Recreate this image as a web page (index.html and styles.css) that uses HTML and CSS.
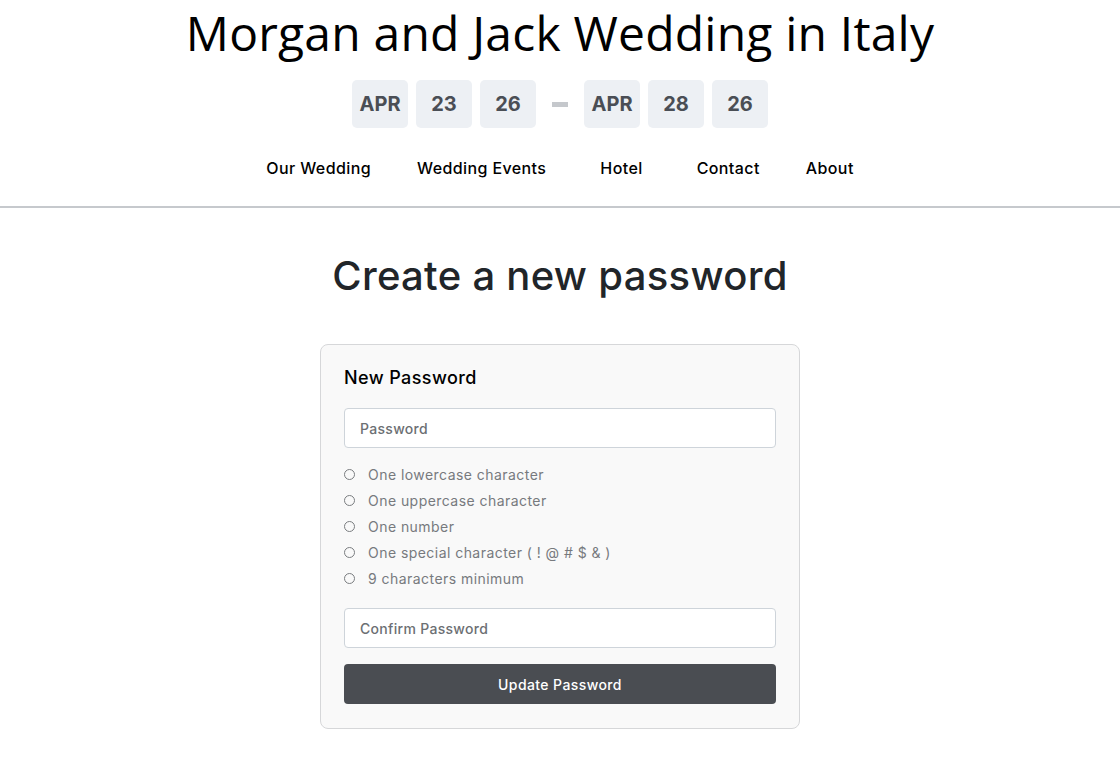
FILE: index.html
```html
<!DOCTYPE html>
<html lang="en">
<head>
<meta charset="utf-8">
<title>Create a new password</title>
<link rel="stylesheet" href="styles.css">
</head>
<body>
<header class="site-header">
  <h1 class="site-title">Morgan and Jack Wedding in Italy</h1>
  <div class="dates">
    <div class="date-group">
      <span class="chip">APR</span>
      <span class="chip">23</span>
      <span class="chip">26</span>
    </div>
    <span class="dash"></span>
    <div class="date-group">
      <span class="chip">APR</span>
      <span class="chip">28</span>
      <span class="chip">26</span>
    </div>
  </div>
  <nav class="nav">
    <a href="#" class="nav-link">Our Wedding</a>
    <a href="#" class="nav-link nav-link--menu">Wedding Events</a>
    <a href="#" class="nav-link nav-link--menu">Hotel</a>
    <a href="#" class="nav-link">Contact</a>
    <a href="#" class="nav-link">About</a>
  </nav>
</header>
<main class="main">
  <h2 class="page-title">Create a new password</h2>
  <form class="card">
    <h3 class="card-title">New Password</h3>
    <input class="field" type="password" placeholder="Password">
    <ul class="rules">
      <li class="rule"><span class="dot"></span>One lowercase character</li>
      <li class="rule"><span class="dot"></span>One uppercase character</li>
      <li class="rule"><span class="dot"></span>One number</li>
      <li class="rule"><span class="dot"></span>One special character ( ! @ # $ &amp; )</li>
      <li class="rule"><span class="dot"></span>9 characters minimum</li>
    </ul>
    <input class="field" type="password" placeholder="Confirm Password">
    <button class="btn" type="button">Update Password</button>
  </form>
</main>
</body>
</html>
```
FILE: styles.css
```css
* { box-sizing: border-box; }
body {
  margin: 0;
  font-family: Inter, "Open Sans", sans-serif;
  letter-spacing: 0.4px;
  color: #212529;
  background: #fff;
}
.site-header {
  display: flex;
  flex-direction: column;
  align-items: center;
  border-bottom: 2px solid #c6c9cd;
  padding-bottom: 20px;
}
.site-title {
  margin: 5px 0 0;
  font-family: "Open Sans", sans-serif;
  font-size: 48px;
  line-height: 56px;
  font-weight: 400;
  letter-spacing: 0.2px;
  color: #000;
}
.dates {
  display: flex;
  align-items: center;
  margin-top: 19px;
}
.date-group { display: flex; gap: 8px; }
.chip {
  width: 56px;
  height: 48px;
  display: flex;
  align-items: center;
  justify-content: center;
  background: #edf0f4;
  border-radius: 5px;
  font-family: Inter, sans-serif;
  font-weight: 700;
  font-size: 20px;
  letter-spacing: 0;
  color: #4a4e55;
}
.dash {
  width: 16px;
  height: 5px;
  background: #c5c8cc;
  margin: 0 16px;
}
.nav {
  display: flex;
  margin-top: 22px;
}
.nav-link {
  font-size: 16px;
  line-height: 36px;
  font-weight: 500;
  color: #000;
  text-decoration: none;
  padding: 0 23px;
}
.nav-link--menu { padding-right: 31px; }
.main {
  display: flex;
  flex-direction: column;
  align-items: center;
  padding-top: 44px;
}
.page-title {
  margin: 0;
  font-size: 40px;
  line-height: 48px;
  font-weight: 500;
  letter-spacing: 0.3px;
  color: #212529;
}
.card {
  width: 480px;
  margin-top: 44px;
  padding: 24px 23px;
  background: #f9f9f9;
  border: 1px solid #d6d7d9;
  border-radius: 8px;
  display: flex;
  flex-direction: column;
}
.card-title {
  margin: 0;
  font-size: 18px;
  line-height: 18px;
  font-weight: 500;
  color: #000;
}
.field {
  height: 40px;
  width: 100%;
  border: 1px solid #ced4da;
  border-radius: 4px;
  background: #fff;
  padding: 0 15px;
  font-family: inherit;
  letter-spacing: 0.3px;
  font-size: 14px;
  color: #212529;
}
.field::placeholder { color: #6c6f73; font-weight: 500; }
.card-title + .field { margin-top: 21px; }
.rules {
  list-style: none;
  margin: 13px 0 0;
  padding: 0;
  display: flex;
  flex-direction: column;
}
.rule {
  display: flex;
  align-items: center;
  height: 26px;
  font-size: 14px;
  letter-spacing: 0.45px;
  color: #777a7e;
}
.dot {
  width: 11px;
  height: 11px;
  border: 1px solid #7a7d80;
  border-radius: 50%;
  margin-right: 13px;
  flex: none;
}
.rules + .field { margin-top: 17px; }
.btn {
  margin-top: 16px;
  height: 40px;
  width: 100%;
  border: 0;
  border-radius: 4px;
  background: #4a4d52;
  color: #fff;
  font-family: inherit;
  letter-spacing: 0.4px;
  font-size: 14px;
  font-weight: 500;
}
```
